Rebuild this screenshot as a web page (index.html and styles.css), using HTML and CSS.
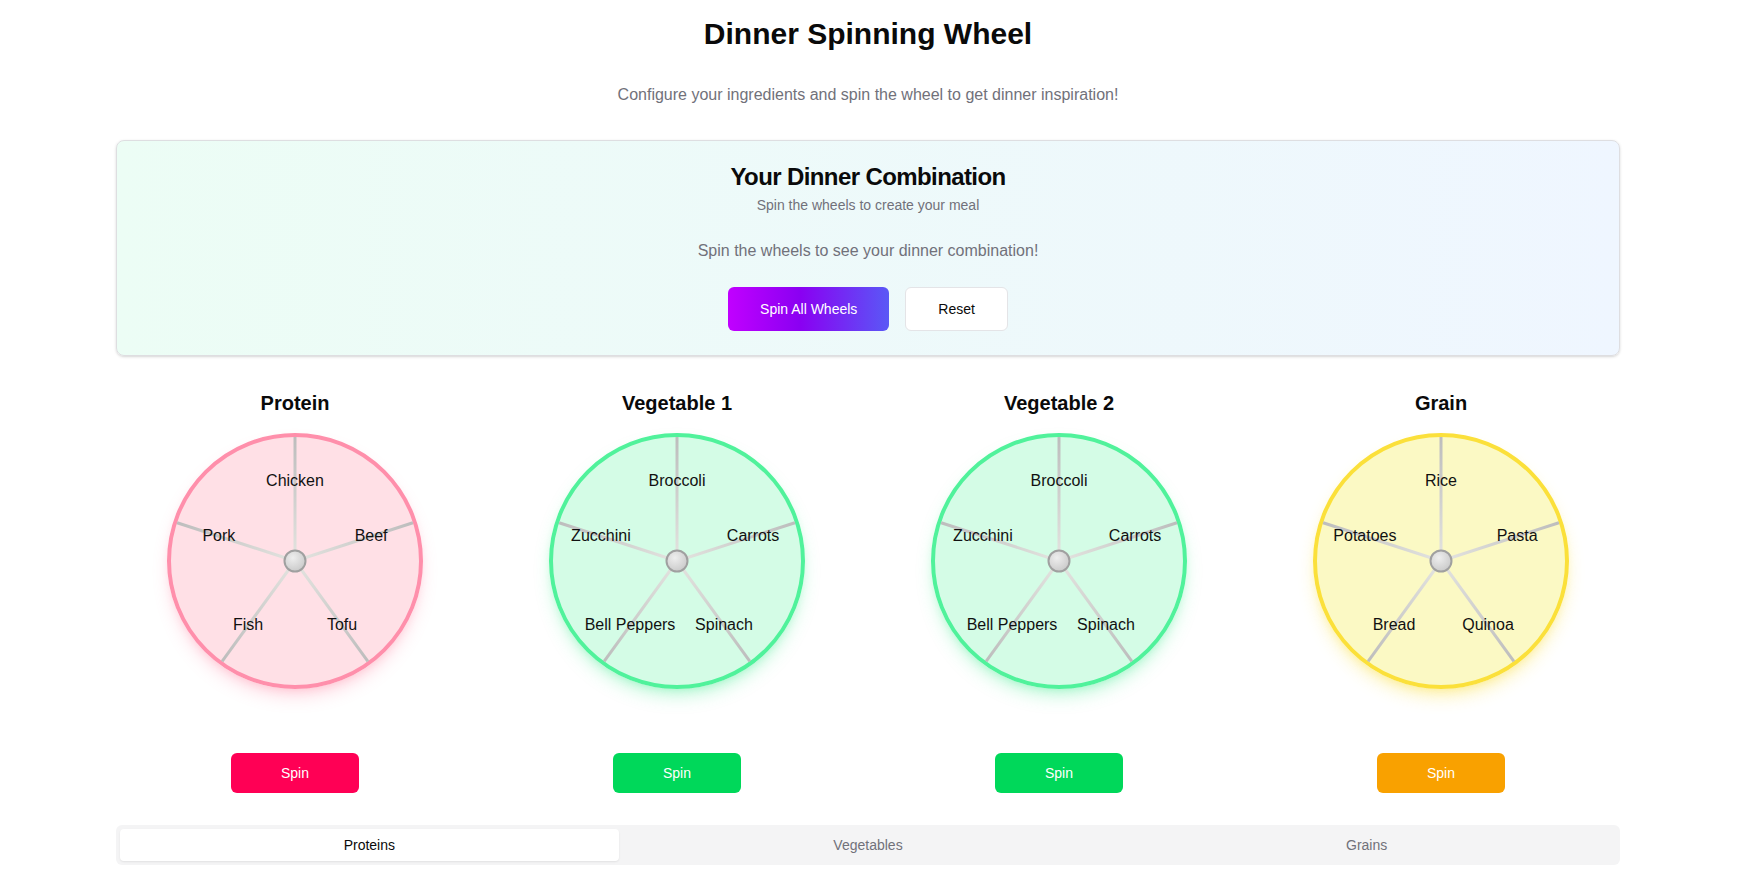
FILE: index.html
```html
<!DOCTYPE html>
<html lang="en">
<head>
<meta charset="utf-8">
<title>Dinner Spinning Wheel</title>
<link rel="stylesheet" href="styles.css">
</head>
<body>
<svg class="svg-defs" width="0" height="0" aria-hidden="true">
  <defs>
    <radialGradient id="spokeGrad" cx="128" cy="128" r="124" gradientUnits="userSpaceOnUse">
      <stop offset="0" stop-color="#e4e4e0"/>
      <stop offset="1" stop-color="#bdbdbd"/>
    </radialGradient>
    <radialGradient id="hubGrad" cx="0.4" cy="0.35" r="0.75">
      <stop offset="0" stop-color="#eeeeee"/>
      <stop offset="1" stop-color="#c6c6c6"/>
    </radialGradient>
  </defs>
</svg>
<main class="page">
  <h1 class="page-title">Dinner Spinning Wheel</h1>
  <p class="page-subtitle">Configure your ingredients and spin the wheel to get dinner inspiration!</p>

  <section class="combo-card">
    <div class="combo-header">
      <h2 class="combo-title">Your Dinner Combination</h2>
      <p class="combo-desc">Spin the wheels to create your meal</p>
    </div>
    <div class="combo-content">
      <p class="combo-empty">Spin the wheels to see your dinner combination!</p>
      <div class="combo-actions">
        <button class="btn btn-gradient">Spin All Wheels</button>
        <button class="btn btn-outline">Reset</button>
      </div>
    </div>
  </section>

  <section class="wheels">
    <div class="wheel-col">
      <h3 class="wheel-title">Protein</h3>
      <div class="wheel wheel-protein">
        <svg class="wheel-svg" viewBox="0 0 256 256" width="256" height="256">
          <circle class="face" cx="128" cy="128" r="126"/>
          <g class="spokes">
            <line x1="128" y1="128" x2="128" y2="4"/>
            <line x1="128" y1="128" x2="245.9" y2="89.7"/>
            <line x1="128" y1="128" x2="200.9" y2="228.3"/>
            <line x1="128" y1="128" x2="55.1" y2="228.3"/>
            <line x1="128" y1="128" x2="10.1" y2="89.7"/>
          </g>
          <circle class="hub" cx="128" cy="128" r="10.5"/>
          <text class="label" x="128" y="47">Chicken</text>
          <text class="label" x="204.1" y="102.3">Beef</text>
          <text class="label" x="175" y="191.7">Tofu</text>
          <text class="label" x="81" y="191.7">Fish</text>
          <text class="label" x="51.9" y="102.3">Pork</text>
        </svg>
      </div>
      <button class="spin-btn spin-protein">Spin</button>
    </div>

    <div class="wheel-col">
      <h3 class="wheel-title">Vegetable 1</h3>
      <div class="wheel wheel-veg">
        <svg class="wheel-svg" viewBox="0 0 256 256" width="256" height="256">
          <circle class="face" cx="128" cy="128" r="126"/>
          <g class="spokes">
            <line x1="128" y1="128" x2="128" y2="4"/>
            <line x1="128" y1="128" x2="245.9" y2="89.7"/>
            <line x1="128" y1="128" x2="200.9" y2="228.3"/>
            <line x1="128" y1="128" x2="55.1" y2="228.3"/>
            <line x1="128" y1="128" x2="10.1" y2="89.7"/>
          </g>
          <circle class="hub" cx="128" cy="128" r="10.5"/>
          <text class="label" x="128" y="47">Broccoli</text>
          <text class="label" x="204.1" y="102.3">Carrots</text>
          <text class="label" x="175" y="191.7">Spinach</text>
          <text class="label" x="81" y="191.7">Bell Peppers</text>
          <text class="label" x="51.9" y="102.3">Zucchini</text>
        </svg>
      </div>
      <button class="spin-btn spin-veg">Spin</button>
    </div>

    <div class="wheel-col">
      <h3 class="wheel-title">Vegetable 2</h3>
      <div class="wheel wheel-veg">
        <svg class="wheel-svg" viewBox="0 0 256 256" width="256" height="256">
          <circle class="face" cx="128" cy="128" r="126"/>
          <g class="spokes">
            <line x1="128" y1="128" x2="128" y2="4"/>
            <line x1="128" y1="128" x2="245.9" y2="89.7"/>
            <line x1="128" y1="128" x2="200.9" y2="228.3"/>
            <line x1="128" y1="128" x2="55.1" y2="228.3"/>
            <line x1="128" y1="128" x2="10.1" y2="89.7"/>
          </g>
          <circle class="hub" cx="128" cy="128" r="10.5"/>
          <text class="label" x="128" y="47">Broccoli</text>
          <text class="label" x="204.1" y="102.3">Carrots</text>
          <text class="label" x="175" y="191.7">Spinach</text>
          <text class="label" x="81" y="191.7">Bell Peppers</text>
          <text class="label" x="51.9" y="102.3">Zucchini</text>
        </svg>
      </div>
      <button class="spin-btn spin-veg">Spin</button>
    </div>

    <div class="wheel-col">
      <h3 class="wheel-title">Grain</h3>
      <div class="wheel wheel-grain">
        <svg class="wheel-svg" viewBox="0 0 256 256" width="256" height="256">
          <circle class="face" cx="128" cy="128" r="126"/>
          <g class="spokes">
            <line x1="128" y1="128" x2="128" y2="4"/>
            <line x1="128" y1="128" x2="245.9" y2="89.7"/>
            <line x1="128" y1="128" x2="200.9" y2="228.3"/>
            <line x1="128" y1="128" x2="55.1" y2="228.3"/>
            <line x1="128" y1="128" x2="10.1" y2="89.7"/>
          </g>
          <circle class="hub" cx="128" cy="128" r="10.5"/>
          <text class="label" x="128" y="47">Rice</text>
          <text class="label" x="204.1" y="102.3">Pasta</text>
          <text class="label" x="175" y="191.7">Quinoa</text>
          <text class="label" x="81" y="191.7">Bread</text>
          <text class="label" x="51.9" y="102.3">Potatoes</text>
        </svg>
      </div>
      <button class="spin-btn spin-grain">Spin</button>
    </div>
  </section>

  <div class="tabs">
    <button class="tab tab-active">Proteins</button>
    <button class="tab">Vegetables</button>
    <button class="tab">Grains</button>
  </div>
</main>
</body>
</html>
```

FILE: styles.css
```css
* {
  box-sizing: border-box;
}

html, body {
  margin: 0;
  padding: 0;
  background: #ffffff;
}

body {
  font-family: "Liberation Sans", Arial, sans-serif;
  color: #0a0a0a;
  padding-right: 6px;
}

.svg-defs {
  display: block;
  width: 0;
  height: 0;
  overflow: hidden;
}

.page {
  max-width: 1536px;
  margin: 0 auto;
  padding: 16px 16px 32px;
}

.page-title {
  margin: 0 0 31px;
  font-size: 30px;
  line-height: 36px;
  font-weight: 700;
  text-align: center;
}

.page-subtitle {
  margin: 0 0 33px;
  font-size: 16px;
  line-height: 24px;
  text-align: center;
  color: #71717a;
}

/* Combination card */
.combo-card {
  margin-bottom: 33px;
  border: 1px solid #dedee1;
  border-radius: 8px;
  background: linear-gradient(to right, #ecfdf5, #eff6ff);
  box-shadow: 0 1px 3px rgba(0, 0, 0, 0.14), 0 1px 2px -1px rgba(0, 0, 0, 0.1);
}

.combo-header {
  padding: 24px 24px 24px;
  display: flex;
  flex-direction: column;
  align-items: center;
  gap: 6px;
}

.combo-title {
  margin: 0;
  font-size: 24px;
  line-height: 24px;
  font-weight: 700;
  letter-spacing: -0.6px;
}

.combo-desc {
  margin: 0;
  font-size: 14px;
  line-height: 20px;
  color: #71717a;
}

.combo-content {
  padding: 0 24px 24px;
  text-align: center;
}

.combo-empty {
  margin: 0 0 24px;
  font-size: 16px;
  line-height: 24px;
  color: #71717a;
}

.combo-actions {
  display: flex;
  justify-content: center;
  gap: 16px;
}

.btn {
  height: 44px;
  padding: 0 32px;
  border-radius: 6px;
  font-family: inherit;
  font-size: 14px;
  font-weight: 500;
  cursor: pointer;
}

.btn-gradient {
  border: none;
  color: #ffffff;
  background: linear-gradient(to right, #c100ff, #8a00f2 45%, #5a58f6);
}

.btn-outline {
  border: 1px solid #e4e4e7;
  background: #ffffff;
  color: #0a0a0a;
}

/* Wheels */
.wheels {
  display: grid;
  grid-template-columns: repeat(4, 1fr);
  gap: 24px;
  margin-bottom: 32px;
}

.wheel-col {
  display: flex;
  flex-direction: column;
  align-items: center;
}

.wheel-title {
  margin: 0 0 16px;
  font-size: 20px;
  line-height: 28px;
  font-weight: 700;
}

.wheel {
  width: 256px;
  height: 256px;
  border-radius: 50%;
  margin-bottom: 64px;
}

.wheel-svg {
  display: block;
}

.face {
  stroke-width: 4;
}

.spokes line {
  stroke: url(#spokeGrad);
  stroke-width: 3;
}

.hub {
  fill: url(#hubGrad);
  stroke: #a0a0a0;
  stroke-width: 2;
}

.label {
  font-family: "Liberation Sans", Arial, sans-serif;
  font-size: 16px;
  fill: #111111;
  text-anchor: middle;
  dominant-baseline: central;
}

.wheel-protein {
  box-shadow: 0 10px 18px -4px rgba(255, 110, 145, 0.3), 0 4px 8px -4px rgba(255, 110, 145, 0.25);
}
.wheel-protein .face {
  fill: #ffe0e6;
  stroke: #ff8fab;
}

.wheel-veg {
  box-shadow: 0 10px 18px -4px rgba(60, 235, 140, 0.35), 0 4px 8px -4px rgba(60, 235, 140, 0.3);
}
.wheel-veg .face {
  fill: #d4fce6;
  stroke: #50f29b;
}

.wheel-grain {
  box-shadow: 0 10px 18px -4px rgba(250, 220, 40, 0.4), 0 4px 8px -4px rgba(250, 220, 40, 0.3);
}
.wheel-grain .face {
  fill: #fbf9c4;
  stroke: #fbe03a;
}

.spin-btn {
  width: 128px;
  height: 40px;
  border: none;
  border-radius: 6px;
  color: #ffffff;
  font-family: inherit;
  font-size: 14px;
  font-weight: 500;
  cursor: pointer;
}

.spin-protein { background: #ff0055; }
.spin-veg { background: #00d85a; }
.spin-grain { background: #f9a100; }

/* Tabs */
.tabs {
  display: grid;
  grid-template-columns: repeat(3, 1fr);
  height: 40px;
  padding: 4px;
  border-radius: 6px;
  background: #f4f4f5;
}

.tab {
  border: none;
  border-radius: 4px;
  background: transparent;
  font-family: inherit;
  font-size: 14px;
  font-weight: 500;
  color: #71717a;
  cursor: pointer;
}

.tab-active {
  background: #ffffff;
  color: #0a0a0a;
  box-shadow: 0 1px 2px rgba(0, 0, 0, 0.08);
}
```
